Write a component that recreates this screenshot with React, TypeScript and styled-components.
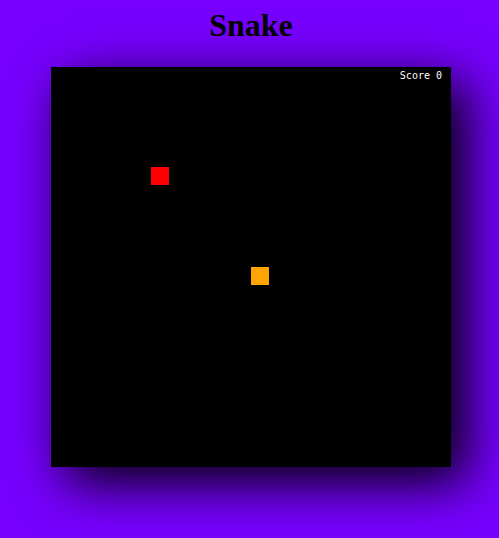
import React from "react";
import styled, { createGlobalStyle } from "styled-components";

const Global = createGlobalStyle`
  html, body { margin: 0; padding: 0; background: #7700ff; }
  body { font-family: "Liberation Serif", "Times New Roman", serif; }
`;

const Page = styled.div`
  display: flex;
  flex-direction: column;
  align-items: center;
  padding: 7px 0 0 3px;
  min-height: 538px;
  box-sizing: border-box;
`;

const Title = styled.h1`
  margin: 0 0 23px;
  font-family: "Liberation Serif", "Times New Roman", serif;
  font-size: 32px;
  font-weight: bold;
  color: #000;
  line-height: 37px;
`;

const Board = styled.div`
  position: relative;
  width: 400px;
  height: 400px;
  background: #000;
  box-shadow: 15px 15px 50px #000;
`;

const Score = styled.div`
  position: absolute;
  top: 3px;
  right: 9px;
  color: #fff;
  font-family: "DejaVu Sans Mono", "Liberation Mono", monospace;
  font-size: 10px;
  line-height: 12px;
`;

const Cell = styled.div<{ $color: string }>`
  position: absolute;
  width: 18px;
  height: 18px;
  background: ${(p) => p.$color};
`;

const cells = [
  { x: 5, y: 5, color: "#ff0000" },
  { x: 10, y: 10, color: "#ffa500" },
];

export default function App() {
  return (
    <>
      <Global />
      <Page>
        <Title>Snake</Title>
        <Board>
          <Score>Score 0</Score>
          {cells.map((c, i) => (
            <Cell
              key={i}
              $color={c.color}
              style={{ left: c.x * 20, top: c.y * 20 }}
            />
          ))}
        </Board>
      </Page>
    </>
  );
}
